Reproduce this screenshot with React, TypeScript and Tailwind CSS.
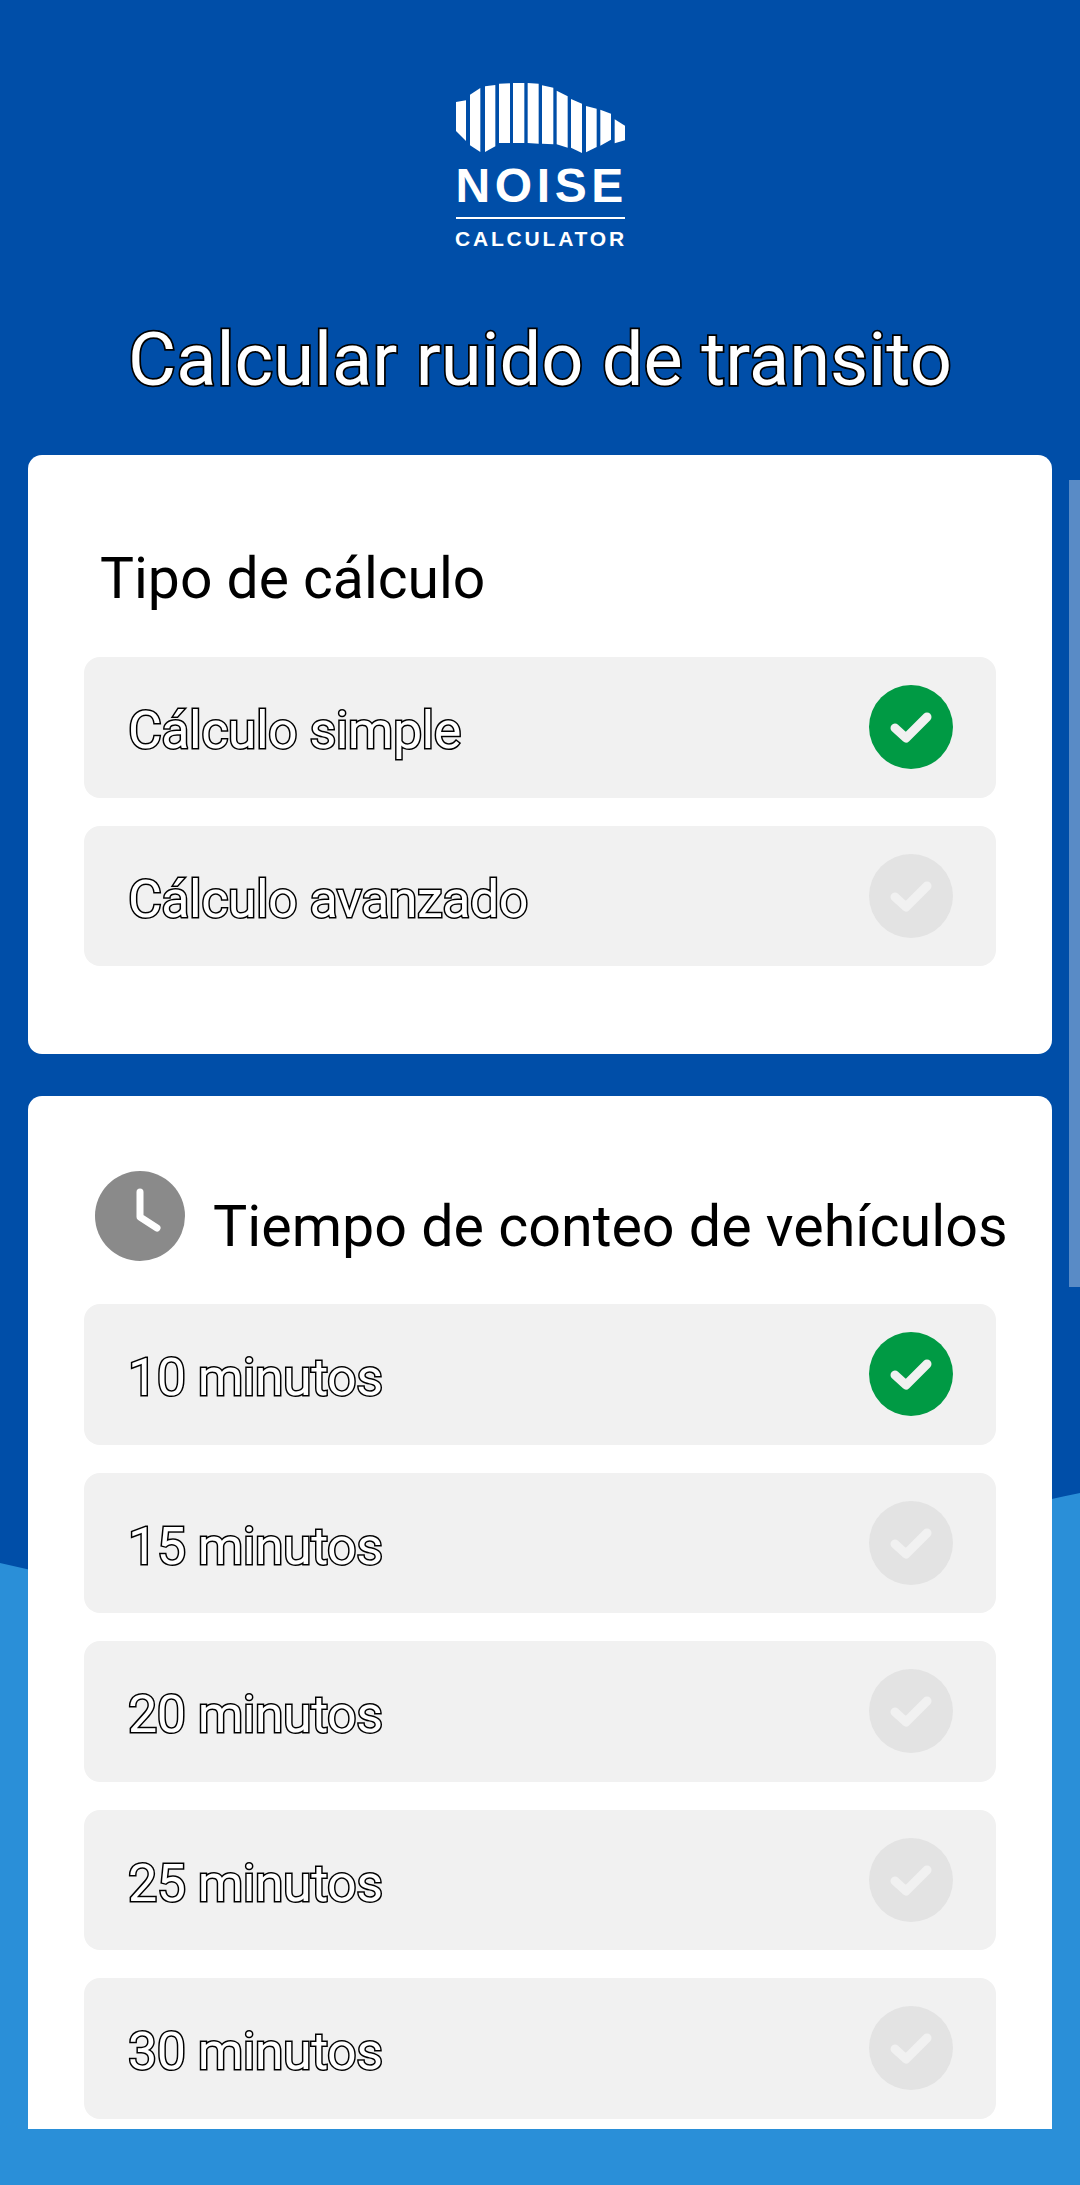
const bars = [
  '165,155 195,150 195,272 165,242',
  '207,133 238,113 238,305 207,285',
  '252,108 283,104 283,288 252,305',
  '294,100 327,99 327,278 294,278',
  '336,98 370,98 370,278 336,278',
  '380,98 413,100 413,280 380,278',
  '423,105 457,112 457,282 423,280',
  '467,121 500,138 500,292 467,282',
  '510,146 543,160 543,308 510,292',
  '555,167 587,175 587,290 555,306',
  '598,178 630,190 630,268 598,286',
  '641,207 672,226 672,270 641,279',
]

function Logo() {
  return (
    <div className="flex w-[169px] flex-col items-center text-white font-['Liberation_Sans',sans-serif]">
      <svg viewBox="165 98 507 210" className="h-[70px] w-[169px]" fill="#fff">
        {bars.map((points) => (
          <polygon key={points} points={points} />
        ))}
      </svg>
      <div className="mt-[13px] h-[40px] w-full text-center text-[48px] leading-[40px] font-bold tracking-[4.6px] whitespace-nowrap">NOISE</div>
      <div className="mt-[11px] h-[2px] w-full bg-white" />
      <div className="mt-[10px] pl-[2px] text-center text-[21px] leading-[20px] font-bold tracking-[2.8px] whitespace-nowrap">CALCULATOR</div>
    </div>
  )
}

function Check({ selected }: { selected: boolean }) {
  return (
    <span className={`flex h-[84px] w-[84px] items-center justify-center rounded-full ${selected ? 'bg-[#009a44]' : 'bg-[#e3e3e3]'}`}>
      <svg viewBox="0 0 84 84" className="h-[84px] w-[84px]" fill="none">
        <path d="M26 43 L37 53 L58 32" stroke="#f1f1f1" strokeWidth="9" strokeLinecap="round" strokeLinejoin="round" />
      </svg>
    </span>
  )
}

function Option({ label, selected = false }: { label: string; selected?: boolean }) {
  return (
    <div className="flex h-[140.5px] items-center justify-between rounded-[16px] bg-[#f1f1f1] pr-[43px] pl-[44px]">
      <span className="pt-[8px] text-[52px] tracking-[-0.55px] text-white [-webkit-text-stroke:3px_#000] [paint-order:stroke_fill]">{label}</span>
      <Check selected={selected} />
    </div>
  )
}

export default function App() {
  return (
    <div className="relative h-[2185px] w-[1080px] overflow-hidden bg-[#004ea8] font-['Roboto',sans-serif]">
      <svg viewBox="0 0 1080 2185" className="absolute inset-0 h-[2185px] w-[1080px]">
        <path d="M0 1563 C 200 1610 400 1620 600 1590 C 800 1560 950 1520 1080 1493 L1080 2185 L0 2185 Z" fill="#2a8fd8" />
      </svg>

      <header className="relative flex h-[455px] flex-col items-center">
        <div className="pt-[83px]">
          <Logo />
        </div>
        <h1 className="mt-[66px] text-[74px] leading-[90px] text-white [-webkit-text-stroke:3.5px_#000] [paint-order:stroke_fill]">Calcular ruido de transito</h1>
      </header>

      <div className="relative ml-[28px] flex h-[1674px] w-[1024px] flex-col gap-[42px] overflow-hidden">
        <section className="rounded-[14px] bg-white px-[56px] pt-[84px] pb-[88px]">
          <h2 className="pl-[16px] text-[57px] leading-[80px] text-black">Tipo de cálculo</h2>
          <div className="mt-[38px] flex flex-col gap-[28px]">
            <Option label="Cálculo simple" selected />
            <Option label="Cálculo avanzado" />
          </div>
        </section>

        <section className="rounded-t-[14px] bg-white px-[56px] pt-[75px] pb-[40px]">
          <div className="flex items-start gap-[28px] pl-[11px]">
            <svg viewBox="0 0 90 90" className="h-[90px] w-[90px] shrink-0">
              <circle cx="45" cy="45" r="45" fill="#8a8a8a" />
              <path d="M45 21 V46 L62 57" fill="none" stroke="#fff" strokeWidth="7" strokeLinecap="round" strokeLinejoin="round" />
            </svg>
            <h2 className="mt-[16px] text-[57.4px] leading-[80px] whitespace-nowrap text-black">Tiempo de conteo de vehículos</h2>
          </div>
          <div className="mt-[37px] flex flex-col gap-[28px]">
            <Option label="10 minutos" selected />
            <Option label="15 minutos" />
            <Option label="20 minutos" />
            <Option label="25 minutos" />
            <Option label="30 minutos" />
          </div>
        </section>
      </div>

      <div className="absolute top-[480px] right-0 h-[807px] w-[11px] bg-white/35" />
    </div>
  )
}
